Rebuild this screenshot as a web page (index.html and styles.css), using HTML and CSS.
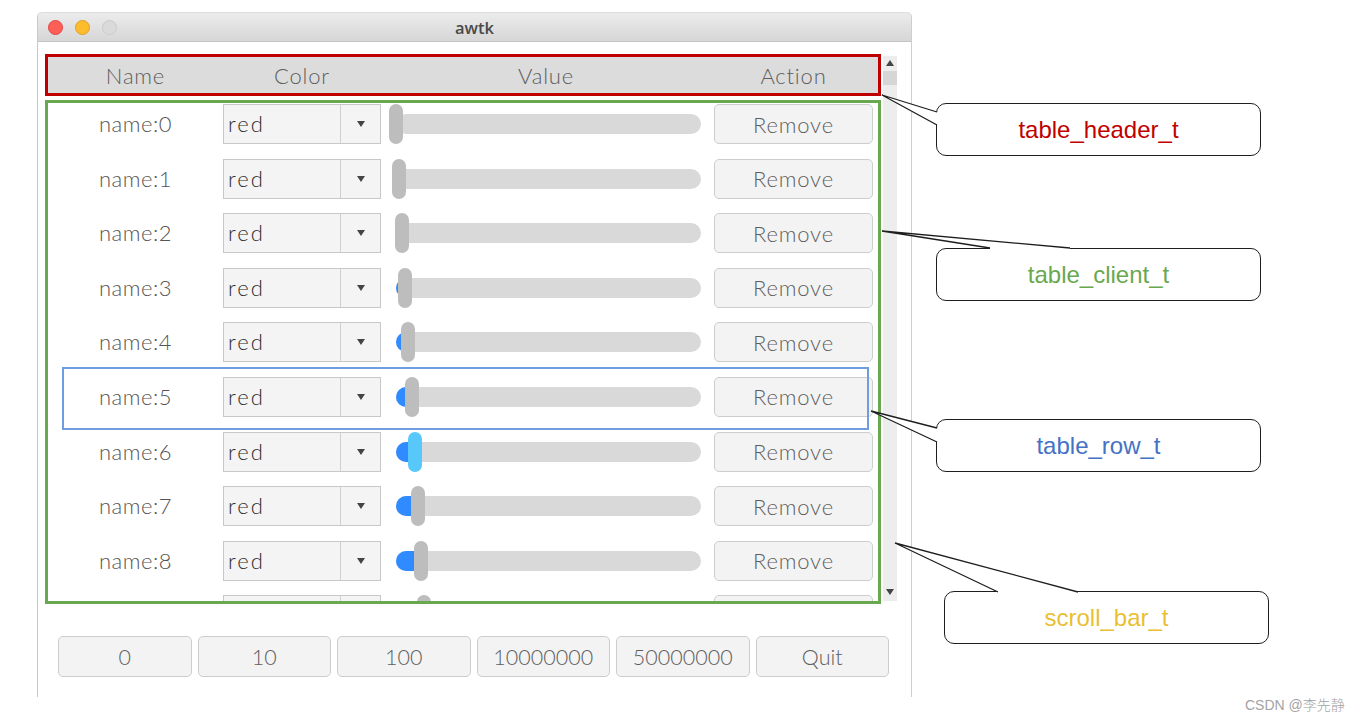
FILE: index.html
```html
<!DOCTYPE html>
<html>
<head>
<meta charset="utf-8">
<title>awtk table view</title>
<link rel="stylesheet" href="styles.css">
</head>
<body>
<div class="stage">
  <div class="window">
    <div class="titlebar">
      <div class="lights"><span class="light red"></span><span class="light yellow"></span><span class="light gray"></span></div>
      <div class="title">awtk</div>
      <div></div>
    </div>
    <div class="win-body">
      <div class="table-area">
        <div class="table-main">
          <div class="table-header">
            <div class="h-name">Name</div>
            <div class="h-color">Color</div>
            <div class="h-value">Value</div>
            <div class="h-action">Action</div>
          </div>
          <div class="table-client">
            <div class="row">
              <div class="c-name">name:0</div>
              <div class="combo"><span class="combo-text">red</span><span class="combo-btn"><i class="tri-down"></i></span></div>
              <div class="slider" style="--p:0"><div class="track"></div><div class="fill"></div><div class="knob"></div></div>
              <button class="btn remove">Remove</button>
            </div>
            <div class="row">
              <div class="c-name">name:1</div>
              <div class="combo"><span class="combo-text">red</span><span class="combo-btn"><i class="tri-down"></i></span></div>
              <div class="slider" style="--p:1"><div class="track"></div><div class="fill"></div><div class="knob"></div></div>
              <button class="btn remove">Remove</button>
            </div>
            <div class="row">
              <div class="c-name">name:2</div>
              <div class="combo"><span class="combo-text">red</span><span class="combo-btn"><i class="tri-down"></i></span></div>
              <div class="slider" style="--p:2"><div class="track"></div><div class="fill"></div><div class="knob"></div></div>
              <button class="btn remove">Remove</button>
            </div>
            <div class="row">
              <div class="c-name">name:3</div>
              <div class="combo"><span class="combo-text">red</span><span class="combo-btn"><i class="tri-down"></i></span></div>
              <div class="slider" style="--p:3"><div class="track"></div><div class="fill"></div><div class="knob"></div></div>
              <button class="btn remove">Remove</button>
            </div>
            <div class="row">
              <div class="c-name">name:4</div>
              <div class="combo"><span class="combo-text">red</span><span class="combo-btn"><i class="tri-down"></i></span></div>
              <div class="slider" style="--p:4"><div class="track"></div><div class="fill"></div><div class="knob"></div></div>
              <button class="btn remove">Remove</button>
            </div>
            <div class="row">
              <div class="c-name">name:5</div>
              <div class="combo"><span class="combo-text">red</span><span class="combo-btn"><i class="tri-down"></i></span></div>
              <div class="slider" style="--p:5"><div class="track"></div><div class="fill"></div><div class="knob"></div></div>
              <button class="btn remove">Remove</button>
              <div class="row-outline"></div>
            </div>
            <div class="row">
              <div class="c-name">name:6</div>
              <div class="combo"><span class="combo-text">red</span><span class="combo-btn"><i class="tri-down"></i></span></div>
              <div class="slider" style="--p:6"><div class="track"></div><div class="fill"></div><div class="knob hot"></div></div>
              <button class="btn remove">Remove</button>
            </div>
            <div class="row">
              <div class="c-name">name:7</div>
              <div class="combo"><span class="combo-text">red</span><span class="combo-btn"><i class="tri-down"></i></span></div>
              <div class="slider" style="--p:7"><div class="track"></div><div class="fill"></div><div class="knob"></div></div>
              <button class="btn remove">Remove</button>
            </div>
            <div class="row">
              <div class="c-name">name:8</div>
              <div class="combo"><span class="combo-text">red</span><span class="combo-btn"><i class="tri-down"></i></span></div>
              <div class="slider" style="--p:8"><div class="track"></div><div class="fill"></div><div class="knob"></div></div>
              <button class="btn remove">Remove</button>
            </div>
            <div class="row">
              <div class="c-name"></div>
              <div class="combo"><span class="combo-text"></span><span class="combo-btn"></span></div>
              <div class="slider" style="--p:9"><div class="track"></div><div class="fill"></div><div class="knob"></div></div>
              <button class="btn remove"></button>
            </div>
          </div>
        </div>
        <div class="scrollbar">
          <i class="tri-up"></i>
          <span class="sb-thumb"></span>
          <span class="sb-space"></span>
          <i class="tri-down sb-down"></i>
        </div>
      </div>
      <div class="bottom-buttons">
        <button class="btn">0</button>
        <button class="btn">10</button>
        <button class="btn">100</button>
        <button class="btn">10000000</button>
        <button class="btn">50000000</button>
        <button class="btn">Quit</button>
      </div>
    </div>
  </div>

  <div class="callout c-header">table_header_t</div>
  <div class="callout c-client">table_client_t</div>
  <div class="callout c-row">table_row_t</div>
  <div class="callout c-scroll">scroll_bar_t</div>

  <svg class="tails" width="1360" height="719" viewBox="0 0 1360 719">
    <g fill="#fff" stroke="none">
      <polygon points="882,95 937,112 940,112 940,125 937,125"/>
      <polygon points="882,231 1070,248 1070,251 990,251 990,248"/>
      <polygon points="871,411 937,428 940,428 940,442 937,442"/>
      <polygon points="895,543 1078,592 1078,595 998,595 998,592"/>
    </g>
    <g fill="none" stroke="#1e1e1e" stroke-width="1.3">
      <polyline points="937,112 882,95 937,125"/>
      <polyline points="1070,248 882,231 990,248"/>
      <polyline points="937,428 871,411 937,442"/>
      <polyline points="1078,592 895,543 998,592"/>
    </g>
  </svg>

  <div class="watermark">CSDN @李先静</div>
</div>
</body>
</html>
```

FILE: styles.css
```css
* { box-sizing: border-box; }
html, body { margin: 0; padding: 0; background: #fff; }

.stage {
  position: relative;
  width: 1360px;
  height: 719px;
  overflow: hidden;
  padding: 12px 0 0 37px;
  font-family: "Lato", "Open Sans", sans-serif;
  font-weight: 300;
}

.window {
  width: 875px;
  height: 685px;
  border-left: 1px solid #c9c9c9;
  border-right: 1px solid #cfcfcf;
  border-radius: 5px 5px 0 0;
  background: #fff;
}

.titlebar {
  height: 30px;
  display: grid;
  grid-template-columns: 1fr auto 1fr;
  align-items: center;
  background: linear-gradient(#ececec, #d6d6d6);
  border-top: 1px solid #dcdcdc;
  border-bottom: 1px solid #c3c3c3;
  border-radius: 5px 5px 0 0;
}
.lights { display: flex; gap: 12px; padding-left: 10px; }
.light { width: 15px; height: 15px; border-radius: 50%; display: block; }
.light.red { background: #fc5f57; border: 1px solid #e14640; }
.light.yellow { background: #fdbc2e; border: 1px solid #dea123; }
.light.gray { background: #dadada; border: 1px solid #cbcbcb; }
.title {
  font-family: "Open Sans", "Liberation Sans", sans-serif;
  font-weight: 600;
  font-size: 16.5px;
  color: #4a4a4a;
}

.win-body { padding: 12px 0 0 7px; }

.table-area { display: flex; gap: 2px; align-items: flex-start; }
.table-main { width: 836px; }

.table-header {
  height: 42px;
  border: 3px solid #c00000;
  background: #dcdcdc;
  display: flex;
  align-items: center;
  font-size: 22px;
  letter-spacing: 0.8px;
  color: #5e5e5e;
  text-align: center;
}
.h-name { width: 175px; }
.h-color { width: 158px; }
.h-value { width: 314px; margin-left: 8px; }
.h-action { width: 159px; margin-left: 11px; }

.table-client {
  margin-top: 4px;
  height: 504px;
  border: 3px solid #6aa84f;
  overflow: hidden;
  padding-top: 1px;
}

.row {
  position: relative;
  height: 54.6px;
  display: flex;
  align-items: flex-start;
}
.c-name {
  width: 175px;
  height: 40px;
  line-height: 40px;
  text-align: center;
  font-size: 22px;
  letter-spacing: 0.5px;
  color: #555;
}

.combo {
  width: 158px;
  height: 40px;
  display: flex;
  border: 1px solid #c8c8c8;
  background: #f4f4f4;
}
.combo-text {
  flex: 1;
  padding-left: 4px;
  line-height: 38px;
  font-size: 22px;
  font-weight: 300;
  letter-spacing: 2px;
  color: #2e2e2e;
}
.combo-btn {
  width: 40px;
  border-left: 1px solid #d0d0d0;
  display: flex;
  align-items: center;
  justify-content: center;
}
.tri-down {
  display: block;
  width: 0;
  height: 0;
  border-left: 4px solid transparent;
  border-right: 4px solid transparent;
  border-top: 6px solid #444;
}
.tri-up {
  display: block;
  width: 0;
  height: 0;
  border-left: 4px solid transparent;
  border-right: 4px solid transparent;
  border-bottom: 6px solid #444;
}

.slider {
  position: relative;
  width: 314px;
  height: 40px;
  margin-left: 8px;
}
.track {
  position: absolute;
  left: 7px;
  right: 2px;
  top: 10px;
  height: 20px;
  border-radius: 10px;
  background: #d9d9d9;
}
.fill {
  position: absolute;
  left: 7px;
  top: 10px;
  height: 20px;
  width: calc(var(--p) * 3.1px + 7px);
  border-radius: 10px 0 0 10px;
  background: #2f8bff;
}
.knob {
  position: absolute;
  top: 0;
  left: calc(var(--p) * 3.1px);
  width: 14px;
  height: 40px;
  border-radius: 7px;
  background: #bdbdbd;
}
.knob.hot { background: #58c8fb; }

.btn {
  height: 40px;
  border: 1px solid #cdcdcd;
  border-radius: 5px;
  background: #f3f3f3;
  font-family: "Lato", "Open Sans", sans-serif;
  font-weight: 300;
  font-size: 21px;
  color: #5e5e5e;
  padding: 0;
}
.btn.remove { width: 159px; margin-left: 11px; font-size: 22px; letter-spacing: 0.8px; }

.row-outline {
  position: absolute;
  left: 14px;
  top: -10px;
  width: 807px;
  height: 63px;
  border: 2px solid #6f9de0;
  pointer-events: none;
}

.scrollbar {
  width: 14px;
  height: 545px;
  margin-top: 2px;
  background: #ededed;
  display: flex;
  flex-direction: column;
  align-items: center;
}
.scrollbar .tri-up { margin-top: 4px; }
.sb-thumb { width: 14px; height: 14px; margin-top: 5px; background: #d6d6d6; }
.sb-space { flex: 1; }
.sb-down { margin-bottom: 6px; }

.bottom-buttons {
  margin: 32px 0 0 13px;
  width: 831px;
  display: grid;
  grid-template-columns: repeat(6, 1fr);
  gap: 6px;
}
.bottom-buttons .btn { height: 41px; font-size: 21.5px; }

.callout {
  position: absolute;
  width: 325px;
  height: 53px;
  border: 1.3px solid #1e1e1e;
  border-radius: 10px;
  background: #fff;
  display: flex;
  align-items: center;
  justify-content: center;
  font-family: "Liberation Sans", Arial, sans-serif;
  font-size: 24px;
  font-weight: 400;
}
.c-header { left: 936px; top: 103px; color: #c00000; }
.c-client { left: 936px; top: 248px; color: #6aa84f; }
.c-row { left: 936px; top: 419px; color: #4472c4; }
.c-scroll { left: 944px; top: 591px; color: #e9bf33; }

.tails { position: absolute; left: 0; top: 0; pointer-events: none; }

.watermark {
  position: absolute;
  left: 1245px;
  top: 694px;
  font-family: "Liberation Sans", "Noto Sans CJK SC", sans-serif;
  font-size: 14px;
  color: #a3a3a3;
}
```
